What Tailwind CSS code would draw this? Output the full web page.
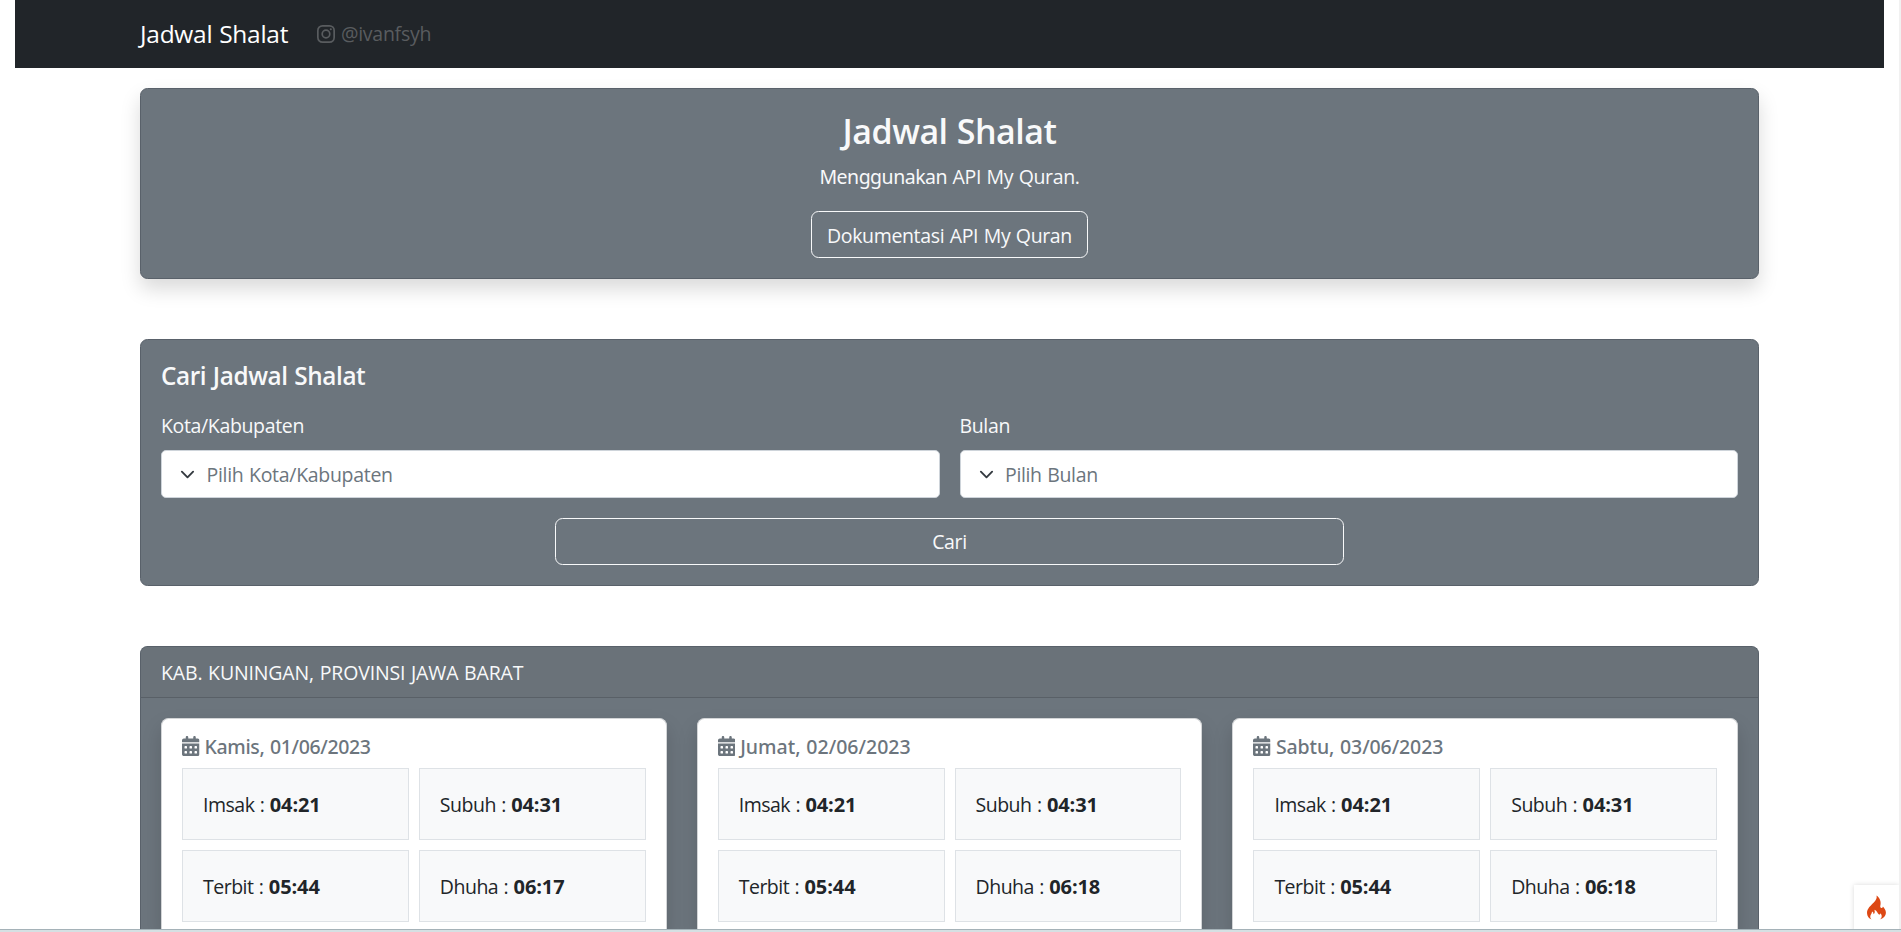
<!DOCTYPE html>
<html lang="id">
<head>
<meta charset="utf-8">
<title>Jadwal Shalat</title>
<script src="https://cdn.jsdelivr.net/npm/@tailwindcss/browser@4"></script>
</head>
<body class="relative h-[932px] overflow-hidden bg-white pr-[2px] font-['Open_Sans','Noto_Sans',sans-serif] text-[19.5px] leading-[30px] tracking-[-0.35px] text-[#212529] [word-spacing:0.8px]">
<svg class="hidden">
  <symbol id="cal" viewBox="0 0 448 512"><path fill="currentColor" d="M128 0c17.700 0 32 14.300 32 32v32h128V32c0-17.700 14.300-32 32-32s32 14.300 32 32v32h48c26.500 0 48 21.500 48 48v48H0v-48c0-26.500 21.500-48 48-48h48V32c0-17.700 14.300-32 32-32zM0 192h448v272c0 26.500-21.500 48-48 48H48c-26.500 0-48-21.500-48-48V192zm64 80v32c0 8.800 7.200 16 16 16h32c8.800 0 16-7.200 16-16v-32c0-8.800-7.200-16-16-16H80c-8.800 0-16 7.200-16 16zm128 0v32c0 8.800 7.200 16 16 16h32c8.800 0 16-7.200 16-16v-32c0-8.800-7.200-16-16-16h-32c-8.800 0-16 7.200-16 16zm144-16c-8.800 0-16 7.200-16 16v32c0 8.800 7.200 16 16 16h32c8.800 0 16-7.200 16-16v-32c0-8.800-7.200-16-16-16h-32zM64 400v32c0 8.800 7.200 16 16 16h32c8.800 0 16-7.200 16-16v-32c0-8.800-7.200-16-16-16H80c-8.800 0-16 7.200-16 16zm144-16c-8.800 0-16 7.200-16 16v32c0 8.800 7.200 16 16 16h32c8.800 0 16-7.200 16-16v-32c0-8.800-7.200-16-16-16h-32zm112 16v32c0 8.800 7.200 16 16 16h32c8.800 0 16-7.200 16-16v-32c0-8.800-7.200-16-16-16h-32c-8.800 0-16 7.200-16 16z"/></symbol>
  <symbol id="chev" viewBox="0 0 16 16"><path fill="none" stroke="#343a40" stroke-width="2" stroke-linecap="round" stroke-linejoin="round" d="m2 5 6 6 6-6"/></symbol>
</svg>
<nav class="mx-auto flex h-[68px] w-[1869px] items-center bg-[#212529] pl-[125px]">
  <span class="w-[177px] text-[24.5px] tracking-[-0.28px] text-white">Jadwal Shalat</span>
  <svg class="-mt-px h-[18px] w-[18px] text-[#595c5f]" viewBox="0 0 18 18" fill="none" stroke="currentColor" stroke-width="1.700"><rect x=".85" y=".85" width="16.300" height="16.300" rx="4.600"/><circle cx="9" cy="9" r="3.800"/><circle cx="13.800" cy="4.200" r="1.050" fill="currentColor" stroke="none"/></svg>
  <span class="ml-[6px] tracking-[-0.27px] text-[#595c5f]">@ivanfsyh</span>
</nav>

<main class="mx-auto mt-5 w-[1619px]">
  <section class="flex h-[191px] flex-col items-center rounded-[7.5px] border border-[#59616a] bg-[#6c757d] px-5 pt-[21px] text-[#f8f9fa] shadow-[0_10px_20px_rgba(0,0,0,0.15)]">
    <h1 class="mb-2.5 text-[34px] leading-[42px] font-semibold tracking-[-0.5px]">Jadwal Shalat</h1>
    <p class="mb-[19px]"><span class="font-['Noto_Sans'] tracking-[-0.5px]">Menggunakan</span> API My Quran.</p>
    <a class="h-[47px] w-[277px] rounded-[7.5px] border border-[#f8f9fa] pt-[8.5px] text-center tracking-[-0.35px]">Dokumentasi API My Quran</a>
  </section>

  <section class="mt-[60px] flex h-[247px] flex-col rounded-[7.5px] border border-[#59616a] bg-[#6c757d] px-5 pt-[21px] text-[#f8f9fa]">
    <h2 class="mb-5 text-[24.300px] leading-[30px] font-semibold tracking-[-0.4px]">Cari Jadwal Shalat</h2>
    <div class="grid grid-cols-2 gap-5">
      <div>
        <div class="mb-[9px]">Kota/Kabupaten</div>
        <div class="flex h-12 items-center rounded-[5px] border border-[#ced4da] bg-white pl-[18px] text-[#6c757d]"><svg class="mr-[11.5px] size-[15px]"><use href="#chev"/></svg><span class="pt-[2px] tracking-[-0.3px]">Pilih Kota/Kabupaten</span></div>
      </div>
      <div>
        <div class="mb-[9px]">Bulan</div>
        <div class="flex h-12 items-center rounded-[5px] border border-[#ced4da] bg-white pl-[18px] text-[#6c757d]"><svg class="mr-[11.5px] size-[15px]"><use href="#chev"/></svg><span class="pt-[2px]">Pilih Bulan</span></div>
      </div>
    </div>
    <div class="mx-auto mt-5 h-[47px] w-[789px] rounded-[7.5px] border border-[#f8f9fa] pt-[8px] text-center">Cari</div>
  </section>

  <section class="mt-[60px] h-[283px] overflow-hidden rounded-t-[7.5px] border border-b-0 border-[#59616a] bg-[#6c757d]">
    <div class="h-[51px] border-b border-[#596067] bg-[#6a7279] px-5 pt-[11px] tracking-[-0.15px] text-[#f8f9fa]">KAB. KUNINGAN, PROVINSI JAWA BARAT</div>
    <div id="days" class="flex gap-[30px] px-5 pt-5"></div>
  </section>
</main>

<div class="absolute top-[885px] left-[1854px] h-[47px] w-[45px] bg-white shadow-[0_0_5px_rgba(0,0,0,0.15)]">
  <svg class="mt-[10px] ml-[12px] h-[25px] w-[21px]" viewBox="0 0 21 25"><path fill="#dd4814" d="M10.500.5c.8 2.600-.5 4.500-2.700 7C5 10.500 1 13.300 1 18c0 3.200 2 5.700 5 6.600-1.300-.9-1.900-2-1.700-3.400.2-1.800 1.800-2.700 1.700-4.700 1.200.5 1.600 1.500 1.500 2.800 1.300-1 1.600-2.600.9-4.600 3 1.300 2.900 3.400 4.300 4.600.7.600 1.800.1 1.600-1.100 2.300 2.200 1.600 5-.6 6.400 3.600-1.100 6.200-3.600 6.200-7.100 0-2.700-1.700-4.200-3-6-.1 1-.7 1.600-1.500 1.500-1.500-.1-1.200-1.700-.9-3.200C15.200 6 13.400 2.500 10.500.5z"/></svg>
</div>
<div class="absolute top-0 right-0 h-full w-[2px] bg-[#f1f1f1]"></div>
<div class="absolute bottom-0 left-0 h-[3px] w-full border-t border-[#a5b2b8] bg-[#d5e0e3]"></div>

<script>
const days = [["Kamis, 01/06/2023", "06:17", "tracking-[-0.35px]"], ["Jumat, 02/06/2023", "06:18", "tracking-[0px]"], ["Sabtu, 03/06/2023", "06:18", "tracking-[-0.1px]"]];
document.getElementById("days").innerHTML = days.map(([d, dhuha, track]) => `
  <article class="h-[212px] w-[505.700px] shrink-0 rounded-t-[7.5px] border border-b-0 border-[#d3d5d7] bg-white px-5 pt-[15px] shadow-[0_10px_20px_rgba(0,0,0,0.15)]">
    <h3 class="mb-2.5 flex h-6 items-center font-['Noto_Sans'] font-medium text-[#6c757d] ${track}"><svg class="mr-[5px] h-5 w-[17.500px]"><use href="#cal"/></svg><span class="pt-[2px]">${d}</span></h3>
    <div class="grid grid-cols-2 gap-2.5">
      ${[["Imsak", "04:21"], ["Subuh", "04:31"], ["Terbit", "05:44"], ["Dhuha", dhuha]].map(([n, t]) => `<div class="h-[72px] border border-[#dee2e6] bg-[#f8f9fa] px-5 pt-[21px] tracking-[-0.5px]">${n} : <b class="text-[20px] font-bold tracking-[-0.1px]">${t}</b></div>`).join("")}
    </div>
  </article>`).join("");
</script>
</body>
</html>
